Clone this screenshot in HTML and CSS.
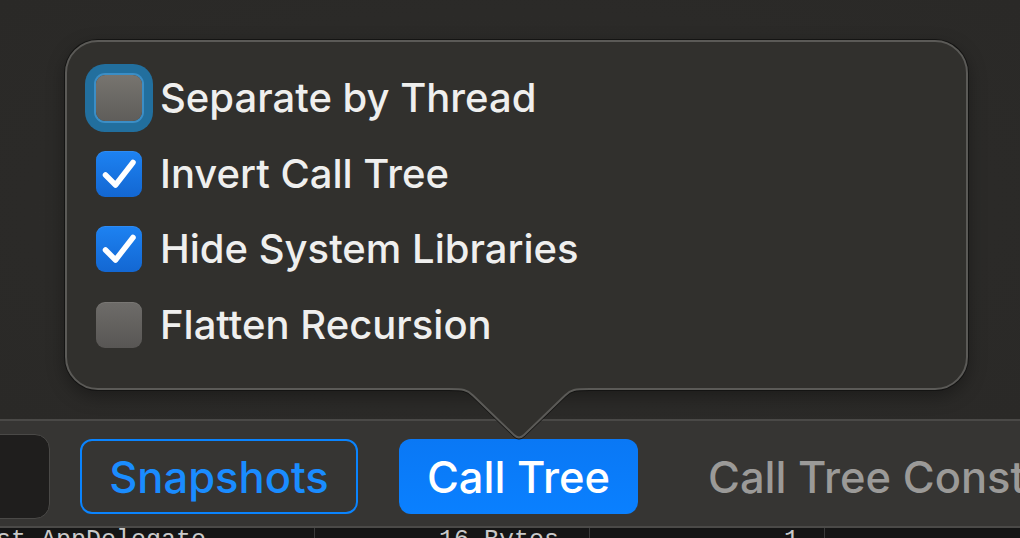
FILE: index.html
```html
<!DOCTYPE html>
<html lang="en">
<head>
<meta charset="utf-8">
<title>Call Tree options</title>
<link rel="stylesheet" href="styles.css">
</head>
<body>
<div class="screen">
  <div class="canvas">
    <div class="popover">
      <ul class="options">
        <li class="option">
          <span class="box focused"></span>
          <span class="label">Separate by Thread</span>
        </li>
        <li class="option">
          <span class="box checked"><svg viewBox="0 0 46 46" class="tick"><path d="M9.5 24 L19.5 34 L37 11.5" /></svg></span>
          <span class="label">Invert Call Tree</span>
        </li>
        <li class="option">
          <span class="box checked"><svg viewBox="0 0 46 46" class="tick"><path d="M9.5 24 L19.5 34 L37 11.5" /></svg></span>
          <span class="label">Hide System Libraries</span>
        </li>
        <li class="option">
          <span class="box"></span>
          <span class="label">Flatten Recursion</span>
        </li>
      </ul>
    </div>
  </div>
  <div class="toolbar">
    <div class="field"></div>
    <div class="seg outline">Snapshots</div>
    <div class="seg active">Call Tree
      <svg class="arrow" viewBox="0 0 140 54" width="140" height="54">
        <path class="arrow-fill" d="M0 0 L140 0 L140 4 C126 4 122 4.5 116 10.5 L75 50 Q70 55 65 50 L24 10.5 C18 4.5 14 4 0 4 Z"/>
        <path class="arrow-dark" d="M0 4 C14 4 18 4.5 24 10.5 L65 50 Q70 55 75 50 L116 10.5 C122 4.5 126 4 140 4"/>
        <path class="arrow-line" d="M0 3 C14 3 18 3.5 24 9.5 L65 49 Q70 54 75 49 L116 9.5 C122 3.5 126 3 140 3"/>
      </svg>
    </div>
    <div class="seg plain"><span class="plain-text">Call Tree Constraints</span></div>
  </div>
  <div class="rows">
    <span class="cell c1">st AppDelegate</span>
    <span class="cell c2">16 Bytes</span>
    <span class="cell c3">1</span>
    <span class="cell c4"></span>
  </div>
</div>
</body>
</html>
```
FILE: styles.css
```css
* { box-sizing: border-box; }
html, body { margin: 0; padding: 0; }
body {
  width: 1020px;
  height: 538px;
  overflow: hidden;
  background: #2b2a28;
  font-family: "Inter", "Noto Sans", sans-serif;
  color: #ececec;
}
.screen {
  display: flex;
  flex-direction: column;
  height: 538px;
}
.canvas {
  flex: none;
  height: 419px;
  padding: 40px 0 0 65px;
  background: radial-gradient(ellipse at 50% 50%, #2d2c2a 0%, #2a2927 100%);
}
.popover {
  width: 903px;
  height: 350px;
  border: 2px solid #5b5a57;
  border-radius: 33px;
  background: #31302d;
  box-shadow: 0 0 0 1px #141413, 0 6px 18px rgba(0,0,0,0.35);
  padding: 33px 0 0 29px;
}
.options {
  list-style: none;
  margin: 0;
  padding: 0;
  display: flex;
  flex-direction: column;
  gap: 29.5px;
}
.option {
  display: flex;
  align-items: center;
  gap: 18px;
  height: 46px;
}
.label {
  font-size: 40px;
  font-weight: 450;
  letter-spacing: 0;
  line-height: 46px;
  color: #efefee;
  white-space: nowrap;
}
.box {
  position: relative;
  flex: none;
  width: 46px;
  height: 46px;
  border-radius: 9px;
  background: linear-gradient(#6e6c69, #585654);
  box-shadow: inset 0 1px 0 rgba(255,255,255,0.08);
}
.box.focused {
  box-shadow: 0 0 0 2px #3b8ec6, 0 0 0 11px #226f9e;
  background: linear-gradient(#77746f, #5f5d5a);
}
.box.checked {
  background: linear-gradient(#1d82f2, #1367d2);
}
.tick {
  display: block;
  width: 46px;
  height: 46px;
}
.tick path {
  fill: none;
  stroke: #ffffff;
  stroke-width: 5.5;
  stroke-linecap: round;
  stroke-linejoin: round;
}
.toolbar {
  flex: none;
  height: 109px;
  background: #363533;
  border-top: 2px solid #4a4947;
  border-bottom: 2px solid #4b4a48;
  display: flex;
  align-items: center;
  padding-top: 6px;
  gap: 41px;
}
.field {
  flex: none;
  width: 70px;
  height: 85px;
  margin-left: -20px;
  margin-right: -11px;
  border-radius: 15px;
  background: #1f1e1d;
  border: 1px solid #4a4947;
}
.seg {
  position: relative;
  flex: none;
  height: 75px;
  display: flex;
  align-items: center;
  font-size: 43.5px;
  font-weight: 500;
  white-space: nowrap;
  border-radius: 12px;
}
.seg.outline {
  width: 278px;
  justify-content: center;
  border: 2.5px solid #0a84ff;
  color: #1a8cff;
}
.seg.active {
  width: 239px;
  justify-content: center;
  background: linear-gradient(#0a78f5, #0a80ff);
  color: #ffffff;
}
.seg.plain {
  flex: 1 1 auto;
  min-width: 0;
  overflow: hidden;
  padding-left: 29px;
  color: #9b9a98;
}
.plain-text { flex: none; }
.arrow {
  position: absolute;
  left: 50%;
  bottom: 100%;
  margin-left: -70px;
  margin-bottom: -1px;
  overflow: visible;
}
.arrow-fill { fill: #31302d; }
.arrow-dark { fill: none; stroke: #141413; stroke-width: 2; }
.arrow-line { fill: none; stroke: #5b5a57; stroke-width: 2; }
.rows {
  flex: 1;
  background: #151515;
  display: flex;
  overflow: hidden;
  font-family: "Liberation Mono", "DejaVu Sans Mono", monospace;
  font-size: 25px;
  color: #c9c9c9;
}
.cell {
  flex: none;
  line-height: 30px;
  margin-top: -2px;
  white-space: nowrap;
  border-right: 1px solid #3a3a3a;
}
.c1 { width: 315px; text-indent: -4px; }
.c2 { width: 275px; text-align: right; padding-right: 30px; }
.c3 { width: 235px; text-align: right; padding-right: 25px; }
.c4 { flex: 1; border-right: none; }
```
